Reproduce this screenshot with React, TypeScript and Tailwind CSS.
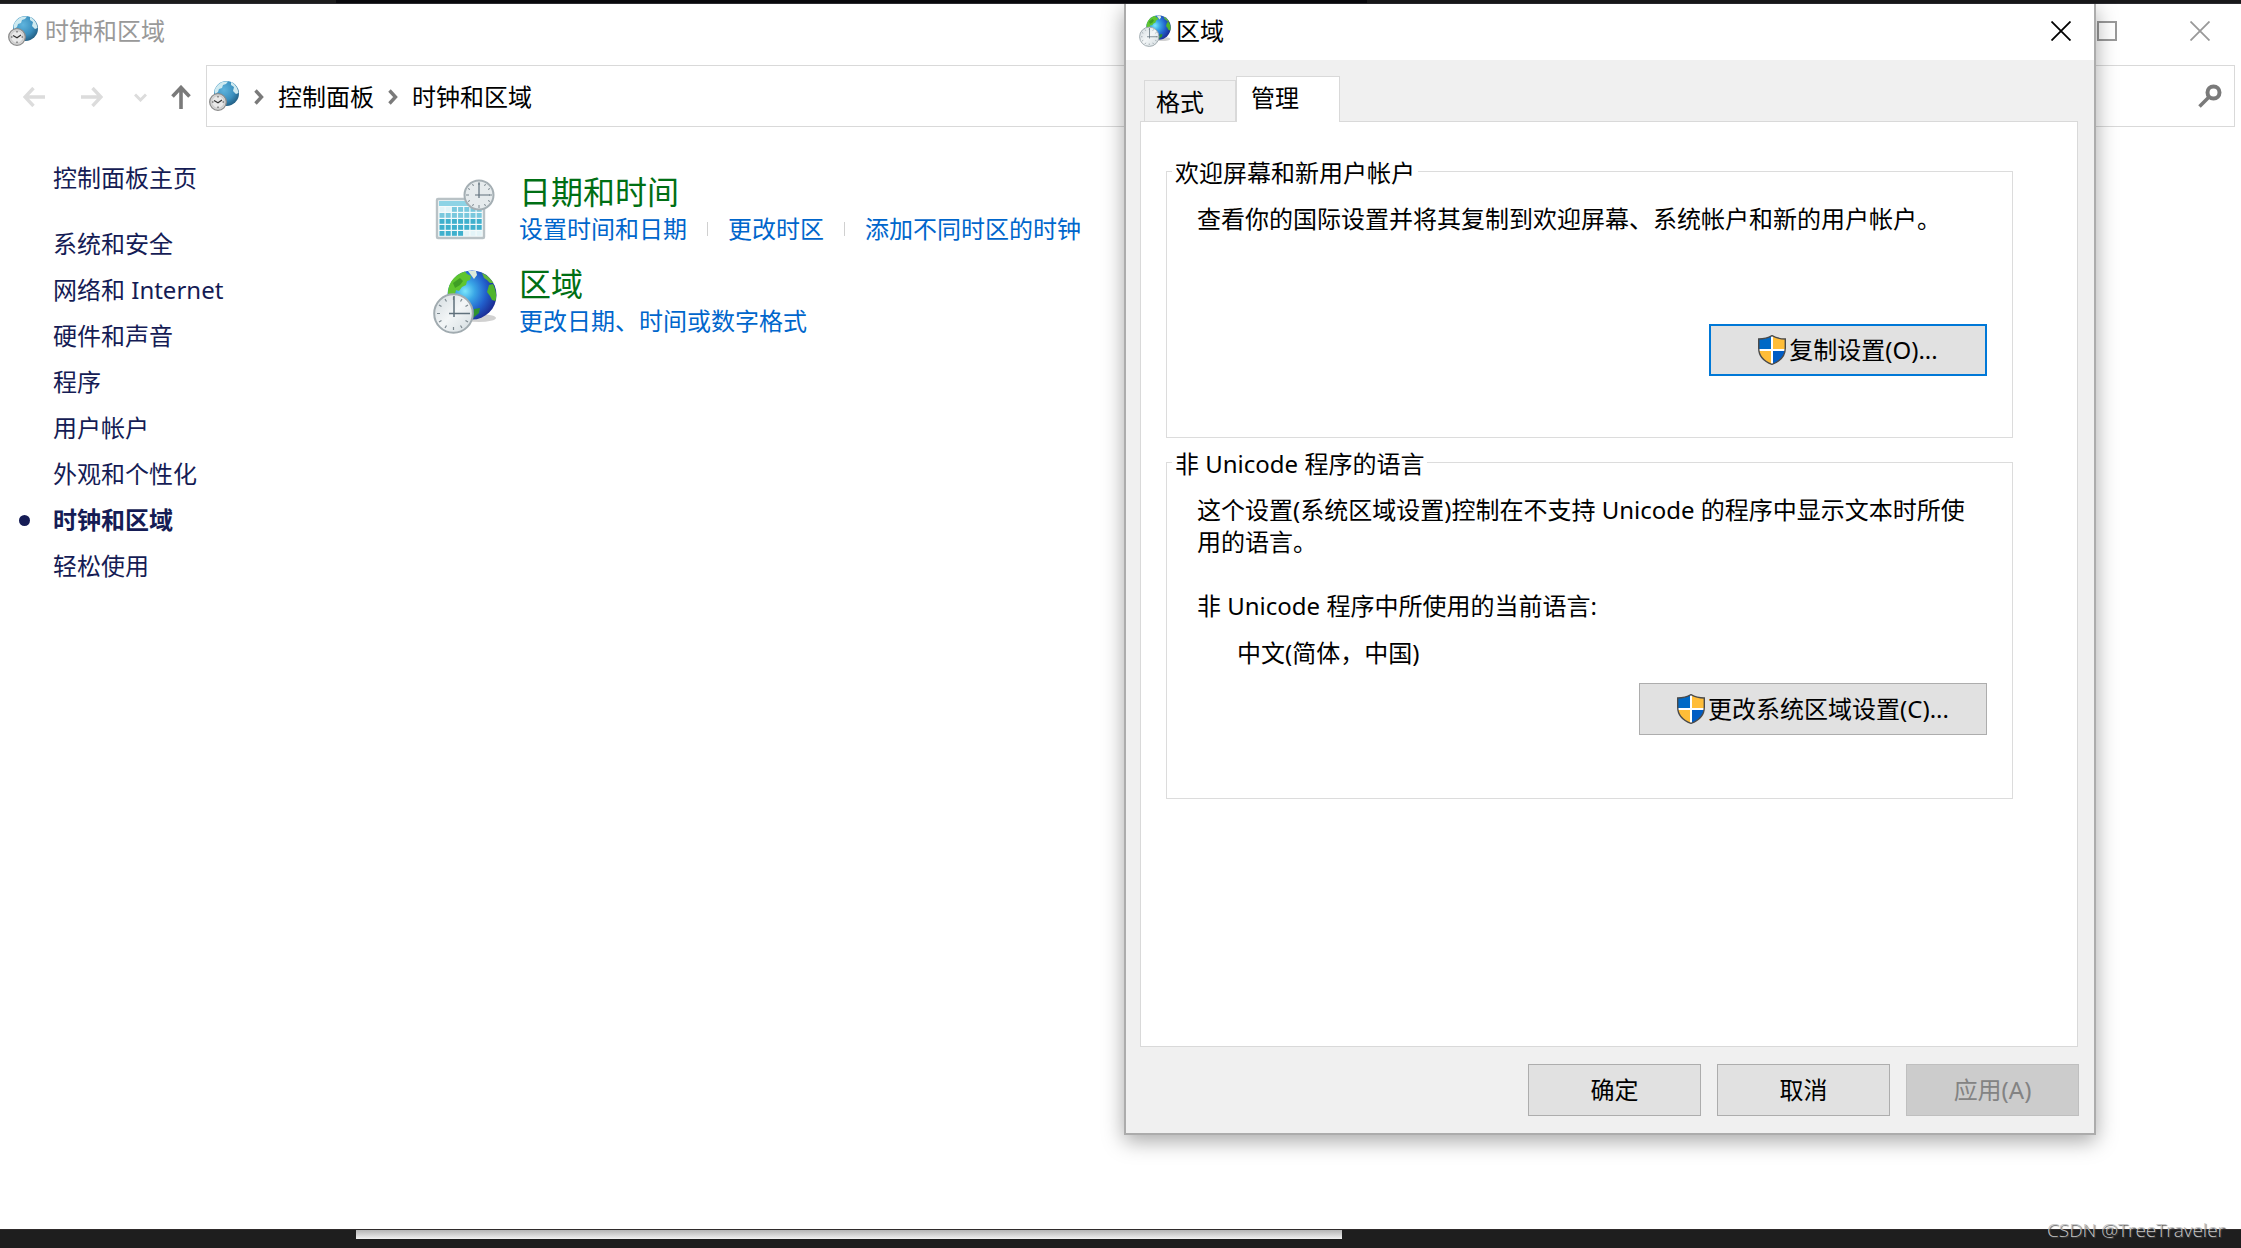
import React from 'react'

const sidebarLinks = [
  '系统和安全',
  '网络和 Internet',
  '硬件和声音',
  '程序',
  '用户帐户',
  '外观和个性化',
  '时钟和区域',
  '轻松使用',
]

// blue globe with a small metal clock, used in the title and the address bar
function ClockGlobeIcon() {
  return (
    <svg width="30" height="30" viewBox="0 0 30 30" className="shrink-0" aria-hidden="true">
      <defs>
        <radialGradient id="seaBlue" cx="0.4" cy="0.35" r="0.7">
          <stop offset="0" stopColor="#5fb4dd" />
          <stop offset="0.6" stopColor="#3a8fbe" />
          <stop offset="1" stopColor="#20597d" />
        </radialGradient>
      </defs>
      <circle cx="17.5" cy="12.5" r="12.5" fill="url(#seaBlue)" />
      <path d="M8 5 C11 1 15 0 19 0.5 L17 3 L14 4 L13 7 L10 8 L9 11 L6 13 C5 10 6 7 8 5Z" fill="#cfeaf0" />
      <path d="M22 1 C26 3 29 7 29.5 12 L27 13 L24 10 L25 6 L22 4Z" fill="#cfeaf0" />
      <circle cx="9" cy="21" r="8.3" fill="#d9d9d9" stroke="#8b8b8b" strokeWidth="1.3" />
      <circle cx="9" cy="21" r="6.3" fill="#e9e9e9" stroke="#b5b5b5" strokeWidth="0.6" />
      <path d="M5 19.5 L9 21.8 L13 19" fill="none" stroke="#333" strokeWidth="1.2" />
      <path d="M9 15v1.5M9 25.5V27M3 21h1.5M13.5 21H15" stroke="#444" strokeWidth="1" />
    </svg>
  )
}

function RegionIcon({ size, className }: { size: number; className?: string }) {
  return (
    <svg width={size} height={size} viewBox="0 0 64 64" className={`shrink-0 ${className ?? ''}`} aria-hidden="true">
      <defs>
        <radialGradient id="ocean" cx="0.36" cy="0.42" r="0.66">
          <stop offset="0" stopColor="#7be6fb" />
          <stop offset="0.3" stopColor="#3aa6e6" />
          <stop offset="0.65" stopColor="#2260cc" />
          <stop offset="1" stopColor="#1b2a92" />
        </radialGradient>
        <linearGradient id="dial" x1="0" y1="0" x2="1" y2="1">
          <stop offset="0" stopColor="#d3dbdf" />
          <stop offset="0.5" stopColor="#f3f6f7" />
          <stop offset="1" stopColor="#d2dbdf" />
        </linearGradient>
      </defs>
      <ellipse cx="46" cy="48" rx="17" ry="4" fill="#000" opacity="0.18" />
      <circle cx="39" cy="25" r="24.5" fill="url(#ocean)" />
      <path d="M18 12 C21 7 26 3 32 1.500 L34 4 L38 6 L37 10 L34 11 L33 15 L29 17 L26 21 L23 20 L22 24 L18 24 L15 26 C14.500 21 15.500 16 18 12Z" fill="#5fc52f" />
      <path d="M20 13 L27 8 L30 11 L27 15 L22 18Z" fill="#3f9e25" />
      <path d="M35 1 L43 1 L44 5 L41 9 L38 5Z" fill="#dcebd9" />
      <path d="M49 3 C54 5 58 9 60.500 13 L57 13 L54 10 L51 8Z" fill="#5fb53a" />
      <path d="M56 15 L60 14 C63 20 64 26 62.500 31 L59 30 L57 26 L54 22Z" fill="#4fb42d" />
      <path d="M41 39 L47 38 L46 43 L40 48Z" fill="#2f9330" />
      <circle cx="20.5" cy="43.5" r="19.3" fill="url(#dial)" stroke="#a1abb0" strokeWidth="2" />
      <path d="M20.5 27v3M20.5 57v3M4 43.5h3M34 43.5h3M12 29l1.500 2.500M6 35l2.500 1.500M29 29l-1.500 2.500M35 35l-2.500 1.500M12 58l1.500-2.500M6 52l2.500-1.500M29 58l-1.500-2.500M35 52l-2.500-1.500" stroke="#7d8990" strokeWidth="1.2" />
      <path d="M21 26V47M16 43.5H37" stroke="#60717c" strokeWidth="1.5" />
    </svg>
  )
}

function CalendarIcon() {
  const rows = [0, 1, 2, 3, 4]
  const cols = [0, 1, 2, 3, 4, 5, 6]
  return (
    <svg width="64" height="64" viewBox="0 0 64 64" className="mt-[7px] shrink-0" aria-hidden="true">
      <rect x="4" y="20" width="47" height="39" rx="1" fill="#f4fafb" stroke="#b9c2c6" strokeWidth="2.4" />
      <rect x="6" y="22" width="43" height="5" fill="#8dd3e5" />
      {rows.map((row) =>
        cols.map((col) => {
          const pale = (row === 0 && col < 2) || (row === 4 && col > 3)
          return (
            <rect
              key={`${row}-${col}`}
              x={6.5 + col * 6.2}
              y={28 + row * 6}
              width="5"
              height="4.8"
              fill={pale ? '#e3f4f8' : row < 2 ? '#79c8dd' : '#3fb0cd'}
            />
          )
        })
      )}
      <circle cx="46" cy="16" r="14.5" fill="#e6ebed" stroke="#a5afb4" strokeWidth="2" />
      <path d="M46 3v3M46 26v3M33 16h3M56 16h3M39.500 5l1 2M35 9.500l2 1M52.500 5l-1 2M57 9.500l-2 1M39.500 27l1-2M35 22.500l2-1M52.500 27l-1-2M57 22.500l-2-1" stroke="#7d8990" />
      <path d="M46 4V19M42 16H57" stroke="#60717c" strokeWidth="1.2" />
    </svg>
  )
}

function ShieldIcon() {
  return (
    <svg width="28" height="30" viewBox="0 0 28 30" className="shrink-0" aria-hidden="true">
      <defs>
        <clipPath id="shieldShape">
          <path d="M14 0.5 C10 3 5 4 0.7 4 V13 C0.7 21 6 26.5 14 29.5 C22 26.5 27.3 21 27.3 13 V4 C23 4 18 3 14 0.5Z" />
        </clipPath>
      </defs>
      <g clipPath="url(#shieldShape)">
        <rect width="28" height="30" fill="#fff" />
        <rect width="13" height="14" fill="#0069c6" />
        <rect x="15" width="13" height="14" fill="#ffbd38" />
        <rect y="16" width="13" height="14" fill="#ffbd38" />
        <rect x="15" y="16" width="13" height="14" fill="#005cc4" />
      </g>
      <path d="M14 0.7 C10 3 5 4 0.7 4 V13 C0.7 21 6 26.5 14 29.3 C22 26.5 27.3 21 27.3 13 V4 C23 4 18 3 14 0.7Z" fill="none" stroke="#4a4a4a" strokeWidth="1.4" />
    </svg>
  )
}

function CloseIcon() {
  return (
    <svg width="20" height="20" viewBox="0 0 20 20" aria-hidden="true">
      <path d="M0.5 0.5L19.5 19.5M19.5 0.5L0.5 19.5" stroke="currentColor" strokeWidth="1.8" />
    </svg>
  )
}

function Chevron() {
  return (
    <svg width="10" height="16" viewBox="0 0 10 16" className="shrink-0" aria-hidden="true">
      <path d="M1.5 1.5L7.5 8L1.5 14.5" fill="none" stroke="#7a7a7a" strokeWidth="3.4" />
    </svg>
  )
}

function ControlPanel() {
  return (
    <main className="flex-1 bg-white">
      <div className="flex h-14 items-center justify-between pb-[2px] pl-2 pr-[31px]">
        <h1 className="flex items-center gap-[7px] text-[#999999]">
          <ClockGlobeIcon />
          时钟和区域
        </h1>
        <div className="flex items-center gap-[73px] text-[#999999]">
          <button aria-label="最大化" className="size-5 border-2 border-[#999999]" />
          <button aria-label="关闭窗口">
            <CloseIcon />
          </button>
        </div>
      </div>

      <div className="flex items-center pr-[6px] pt-[5px]">
        <nav className="flex w-[206px] shrink-0 items-center pl-[23px] pt-[2px]">
          <button aria-label="后退">
            <svg width="22" height="20" viewBox="0 0 22 20" aria-hidden="true">
              <path d="M22 10H2M10.5 1L2 10L10.5 19" fill="none" stroke="#dcdcdc" strokeWidth="3.4" />
            </svg>
          </button>
          <button aria-label="前进" className="ml-9">
            <svg width="22" height="20" viewBox="0 0 22 20" aria-hidden="true">
              <path d="M0 10H20M11.5 1L20 10L11.5 19" fill="none" stroke="#dcdcdc" strokeWidth="3.4" />
            </svg>
          </button>
          <button aria-label="最近浏览的位置" className="ml-[31px]">
            <svg width="13" height="9" viewBox="0 0 13 9" aria-hidden="true">
              <path d="M1 1.5L6.5 7L12 1.5" fill="none" stroke="#dcdcdc" strokeWidth="3" />
            </svg>
          </button>
          <button aria-label="上移" className="ml-6">
            <svg width="20" height="24" viewBox="0 0 20 24" aria-hidden="true">
              <path d="M10 24V3M1.5 11.5L10 2.5L18.500 11.5" fill="none" stroke="#7a7a7a" strokeWidth="3.6" />
            </svg>
          </button>
        </nav>
        <div className="flex h-[62px] flex-1 items-center border border-[#d9d9d9] pl-[2px] pr-3">
          <ClockGlobeIcon />
          <div className="ml-[15px] flex flex-1 items-center gap-[14px] pt-px text-black">
            <Chevron />
            <a href="#panel">控制面板</a>
            <Chevron />
            <a href="#clock">时钟和区域</a>
          </div>
          <button aria-label="搜索">
            <svg width="24" height="24" viewBox="0 0 24 24" aria-hidden="true">
              <circle cx="15.5" cy="8.5" r="6" fill="none" stroke="#7a7a7a" strokeWidth="4" />
              <path d="M11 13L1.5 22.5" stroke="#7a7a7a" strokeWidth="3.6" />
            </svg>
          </button>
        </div>
      </div>

      <div className="flex pt-7">
        <aside className="w-[433px] shrink-0 pl-[53px] leading-[46px] text-[#151c55]">
          <a href="#home" className="block">控制面板主页</a>
          <ul className="pt-5">
            {sidebarLinks.map((label) => (
              <li key={label} className="relative">
                {label === '时钟和区域' && (
                  <span className="absolute -left-[34px] top-[18px] size-[11px] rounded-full bg-[#151c55]" />
                )}
                <a href="#category" className={label === '时钟和区域' ? 'font-bold' : ''}>
                  {label}
                </a>
              </li>
            ))}
          </ul>
        </aside>

        <div className="flex flex-col gap-[18px] pt-[17px] text-[#0066cc]">
          <section className="flex gap-[22px]">
            <CalendarIcon />
            <div>
              <h2 className="text-[32px] leading-10 text-[#006f14]">日期和时间</h2>
              <div className="flex items-center gap-5 leading-[34px]">
                <a href="#set">设置时间和日期</a>
                <span className="h-[14px] w-px bg-[#d0d0d0]" />
                <a href="#zone">更改时区</a>
                <span className="h-[14px] w-px bg-[#d0d0d0]" />
                <a href="#clocks">添加不同时区的时钟</a>
              </div>
            </div>
          </section>
          <section className="flex gap-[22px]">
            <RegionIcon size={64} className="mt-[6px]" />
            <div>
              <h2 className="text-[32px] leading-10 text-[#006f14]">区域</h2>
              <a href="#formats" className="block leading-[34px]">更改日期、时间或数字格式</a>
            </div>
          </section>
        </div>
      </div>
    </main>
  )
}

const footerButton = 'h-[52px] w-[173px] border border-[#adadad] bg-[#e1e1e1]'

function RegionDialog() {
  return (
    <div
      role="dialog"
      aria-label="区域"
      className="absolute right-[145px] top-1 w-[972px] border-x-2 border-b-2 border-[#acacac] bg-[#f0f0f0] text-black shadow-[0_6px_20px_rgba(0,0,0,0.35)]"
    >
      <div className="flex h-14 items-center justify-between bg-white pb-[2px] pl-[13px] pr-[23px]">
        <h2 className="flex items-center gap-[5px]">
          <RegionIcon size={32} />
          区域
        </h2>
        <button aria-label="关闭">
          <CloseIcon />
        </button>
      </div>

      <div className="pb-[17px] pl-[14px] pr-[15px] pt-4">
        <div role="tablist" className="flex items-end pl-1">
          <button role="tab" aria-selected="false" className="h-[41px] w-[92px] border border-b-0 border-[#d9d9d9] pl-[11px] pt-[2px] text-left">
            格式
          </button>
          <button role="tab" aria-selected="true" className="relative -mb-px h-[46px] w-[104px] border border-b-0 border-[#d9d9d9] bg-white pb-1 pl-[14px] text-left">
            管理
          </button>
        </div>

        <div role="tabpanel" className="mr-px min-h-[926px] border border-[#d9d9d9] bg-white pl-[25px] pr-16 pt-[31px]">
          <fieldset className="h-[285px] border border-[#dcdcdc] pl-[30px] pr-[25px]">
            <legend className="-ml-[25px] px-[3px] pt-1 leading-8">欢迎屏幕和新用户帐户</legend>
            <p className="pt-[14px] leading-8">查看你的国际设置并将其复制到欢迎屏幕、系统帐户和新的用户帐户。</p>
            <div className="flex justify-end pt-[89px]">
              <button className="flex h-[52px] w-[278px] items-center justify-center gap-[3px] border-2 border-[#0078d7] bg-[#e1e1e1]">
                <ShieldIcon />
                复制设置(O)...
              </button>
            </div>
          </fieldset>

          <fieldset className="mt-[6px] h-[355px] border border-[#dcdcdc] pl-[30px] pr-[25px]">
            <legend className="-ml-[25px] px-[3px] pt-1 leading-8">非 Unicode 程序的语言</legend>
            <p className="pt-[14px] leading-8">这个设置(系统区域设置)控制在不支持 Unicode 的程序中显示文本时所使用的语言。</p>
            <p className="pt-8 leading-8">非 Unicode 程序中所使用的当前语言:</p>
            <p className="pl-10 pt-[15px] leading-8">中文(简体，中国)</p>
            <div className="flex justify-end pt-[14px]">
              <button className="flex h-[52px] w-[348px] items-center justify-center gap-[3px] border border-[#adadad] bg-[#e1e1e1]">
                <ShieldIcon />
                更改系统区域设置(C)...
              </button>
            </div>
          </fieldset>
        </div>

        <div className="flex justify-end gap-4 pt-[17px]">
          <button className={footerButton}>确定</button>
          <button className={footerButton}>取消</button>
          <button disabled className="h-[52px] w-[173px] border border-[#bfbfbf] bg-[#cccccc] text-[#838383]">
            应用(A)
          </button>
        </div>
      </div>
    </div>
  )
}

export default function App() {
  return (
    <div className="relative flex min-h-screen flex-col overflow-hidden bg-[#1e1e1e] font-['Noto_Sans','Noto_Sans_CJK_SC',sans-serif] text-2xl">
      <div className="flex h-1 border-b border-[#2b2b30]">
        <div className="w-[15%] bg-[#1c1c1c]" />
        <div className="w-[46%] bg-[#08080c]" />
        <div className="flex-1 bg-[#18181a]" />
      </div>
      <ControlPanel />
      <footer className="h-[19px] border-t border-[#2f2b2b] bg-[#1e1e1e]">
        <div className="ml-[15.9%] h-[9px] w-[44%] bg-linear-to-b from-[#b4b4b4] to-[#f2f2f2]" />
      </footer>
      <RegionDialog />
      <span className="absolute bottom-1 right-4 font-['Open_Sans',sans-serif] text-[19px] font-light leading-7 text-[#c4c4c4] [text-shadow:1px_1px_1px_#444]">
        CSDN @TreeTraveler
      </span>
    </div>
  )
}
